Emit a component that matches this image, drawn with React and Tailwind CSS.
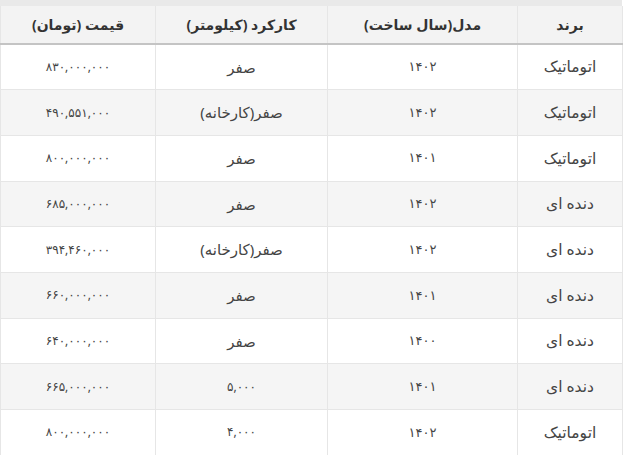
import React from "react";

const rows = [
  { brand: "اتوماتیک", model: "۱۴۰۲", km: "صفر", price: "۸۳۰,۰۰۰,۰۰۰" },
  { brand: "اتوماتیک", model: "۱۴۰۲", km: "صفر(کارخانه)", price: "۴۹۰,۵۵۱,۰۰۰" },
  { brand: "اتوماتیک", model: "۱۴۰۱", km: "صفر", price: "۸۰۰,۰۰۰,۰۰۰" },
  { brand: "دنده ای", model: "۱۴۰۲", km: "صفر", price: "۶۸۵,۰۰۰,۰۰۰" },
  { brand: "دنده ای", model: "۱۴۰۲", km: "صفر(کارخانه)", price: "۳۹۴,۴۶۰,۰۰۰" },
  { brand: "دنده ای", model: "۱۴۰۱", km: "صفر", price: "۶۶۰,۰۰۰,۰۰۰" },
  { brand: "دنده ای", model: "۱۴۰۰", km: "صفر", price: "۶۴۰,۰۰۰,۰۰۰" },
  { brand: "دنده ای", model: "۱۴۰۱", km: "۵,۰۰۰", price: "۶۶۵,۰۰۰,۰۰۰" },
  { brand: "اتوماتیک", model: "۱۴۰۲", km: "۴,۰۰۰", price: "۸۰۰,۰۰۰,۰۰۰" },
];

const isDigits = (s) => /^[۰-۹,]+$/.test(s);

export default function App() {
  return (
    <div className="w-[627px] h-[455px] overflow-hidden bg-white" style={{ fontFamily: '"Noto Sans", "DejaVu Sans", sans-serif' }}>
      <div className="w-[622px] h-[6px] bg-[#e9e9e9]" />
      <table dir="rtl" className="w-[622px] table-fixed border-collapse text-center">
        <colgroup>
          <col className="w-[105px]" />
          <col className="w-[190px]" />
          <col className="w-[172px]" />
          <col className="w-[155px]" />
        </colgroup>
        <thead>
          <tr className="h-[38px] bg-[#f3f3f3] border-b-2 border-[#c4c4c4] text-[14px] font-bold text-[#333]">
            <th className="border-x border-[#e6e6e6]">برند</th>
            <th className="border-x border-[#e6e6e6]">مدل(سال ساخت)</th>
            <th className="border-x border-[#e6e6e6]">کارکرد (کیلومتر)</th>
            <th className="border-x border-[#e6e6e6]">قیمت (تومان)</th>
          </tr>
        </thead>
        <tbody className="text-[#444]">
          {rows.map((r, i) => (
            <tr key={i} className={`h-[45.7px] ${i % 2 === 1 ? "bg-[#f5f5f5]" : "bg-white"}`}>
              <td className="border border-[#e6e6e6] text-[15.5px]">{r.brand}</td>
              <td className="border border-[#e6e6e6] text-[13px]">{r.model}</td>
              <td className={`border border-[#e6e6e6] ${isDigits(r.km) ? "text-[12px] tracking-[0.5px]" : "text-[15px]"}`}>{r.km}</td>
              <td className="border border-[#e6e6e6] text-[12px] tracking-[0.5px]">{r.price}</td>
            </tr>
          ))}
        </tbody>
      </table>
    </div>
  );
}
